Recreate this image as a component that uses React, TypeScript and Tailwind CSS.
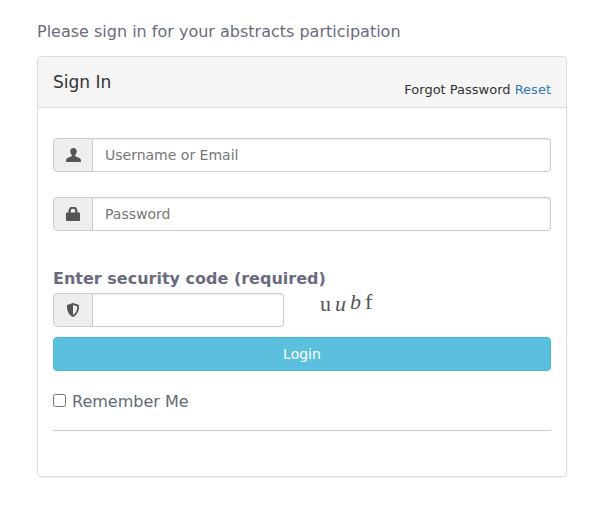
export default function App() {
  return (
    <div className="w-[607px] h-[509px] bg-white pl-[37px] pr-[40px] pt-[22px] font-['DejaVu_Sans',sans-serif]">
      <p className="text-[16px] leading-[20px] text-[#6b6b80] mb-[14px]">Please sign in for your abstracts participation</p>
      <div className="border border-[#dddddd] rounded-[4px] h-[421px] shadow-[0_1px_1px_rgba(0,0,0,0.05)]">
        <div className="h-[51px] bg-[#f5f5f5] border-b border-[#dddddd] rounded-t-[3px] px-[15px] flex justify-between">
          <span className="text-[17px] leading-[20px] text-[#333333] mt-[15px]">Sign In</span>
          <span className="text-[13px] leading-[16px] text-[#333333] mt-[25px]">Forgot Password <a className="text-[#337ab7]">Reset</a></span>
        </div>
        <div className="px-[15px] pt-[30px]">
          <Group className="mb-[25px]" icon={<User />} placeholder="Username or Email" />
          <Group className="mb-[38px]" icon={<Lock />} placeholder="Password" />
          <div className="text-[16px] leading-[20px] font-bold text-[#6b6b80] mb-[4px]">Enter security code (required)</div>
          <div className="flex mb-[10px]">
            <Group className="w-[231px]" icon={<Shield />} placeholder="" />
            <div className="ml-[36px] text-[22px] leading-[24px] text-[#555555] font-['Liberation_Serif',serif] tracking-[4px] h-[34px] whitespace-nowrap">
              <span className="relative top-[-1px]">u</span><span className="relative top-[-1px] italic">u</span><span className="relative top-[-3px] italic">b</span><span className="relative top-[-3px]">f</span>
            </div>
          </div>
          <button className="w-full h-[34px] bg-[#5bc0de] border border-[#46b8da] rounded-[4px] text-white text-[14px] leading-[20px]">Login</button>
          <label className="flex items-center mt-[21px] text-[16px] leading-[20px] text-[#5f6b7a]">
            <input type="checkbox" className="w-[13px] h-[13px] mr-[6px] m-0 relative top-[-2px]" />
            Remember Me
          </label>
          <div className="border-t border-[#cccccc] mt-[18px]" />
        </div>
      </div>
    </div>
  );
}

function Group({ icon, placeholder, className = "" }: { icon: React.ReactNode; placeholder: string; className?: string }) {
  return (
    <div className={`flex h-[34px] ${className}`}>
      <div className="w-[40px] shrink-0 flex items-center justify-center bg-[#eeeeee] border border-[#cccccc] rounded-l-[4px] text-[#555555]">{icon}</div>
      <input
        placeholder={placeholder}
        className="flex-1 min-w-0 border border-l-0 border-[#cccccc] rounded-r-[4px] px-[12px] text-[14px] text-[#555555] placeholder:text-[#777777] shadow-[inset_0_1px_1px_rgba(0,0,0,0.075)] outline-none"
      />
    </div>
  );
}

function User() {
  return (
    <svg width="15" height="14" viewBox="0 0 14 14" fill="currentColor" preserveAspectRatio="none">
      <path d="M7 0C5 0 4 1.400 4 3.300c0 1.500.5 2.900 1.400 3.700.2.300.2.900-.1 1.200C4 9 .6 9.600.2 11.500L0 14h14l-.2-2.500C13.400 9.600 10 9 8.700 8.200c-.3-.3-.3-.9-.1-1.200C9.500 6.200 10 4.800 10 3.300 10 1.400 9 0 7 0z" />
    </svg>
  );
}

function Lock() {
  return (
    <svg width="14" height="14" viewBox="0 0 14 14" fill="currentColor">
      <path fillRule="evenodd" d="M2.500 5.500V4a4 4 0 0 1 9 0v1.500h1.500c.5 0 1 .4 1 1V13c0 .6-.4 1-1 1H1c-.6 0-1-.4-1-1V6.500c0-.6.500-1 1-1h1.500zm2.200 0h4.600V4a2.300 2.300 0 0 0-4.600 0v1.500z" />
    </svg>
  );
}

function Shield() {
  return (
    <svg width="14" height="14" viewBox="0 0 14 14" fill="currentColor">
      <path fillRule="evenodd" d="M7 0L13 2C13.300 7.500 11.500 12 7 14 2.500 12 .7 7.500 1 2L7 0zM7 2V12C10 10.500 11.200 7.500 11.200 3.300L7 2z" />
    </svg>
  );
}
